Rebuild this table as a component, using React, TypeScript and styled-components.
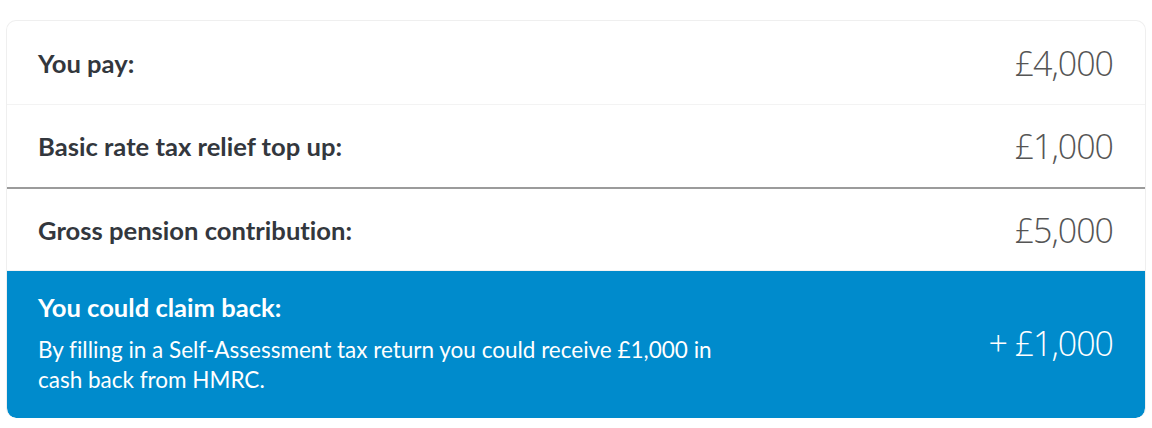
import React from "react";
import styled, { createGlobalStyle } from "styled-components";

const Global = createGlobalStyle`
  html, body { margin: 0; padding: 0; background: #ffffff; }
  body { font-family: Lato, "Open Sans", Arial, sans-serif; font-variant-ligatures: none; }
`;

const Page = styled.div`
  padding: 20px 6px 10px 6px;
`;

const Card = styled.div`
  border: 1px solid #efefef;
  border-bottom: none;
  border-radius: 10px;
  overflow: hidden;
  background: #fff;
  display: flex;
  flex-direction: column;
`;

const Row = styled.div<{ $strong?: boolean; $last?: boolean }>`
  display: flex;
  align-items: center;
  justify-content: space-between;
  height: ${(p) => (p.$strong ? 82 : p.$last ? 81 : 83)}px;
  padding: 0 32px 0 31px;
  border-bottom: ${(p) => (p.$strong ? "2px solid #9b9b9b" : "1px solid #f3f3f3")};
`;

const Label = styled.div`
  font-family: Lato, "Open Sans", Arial, sans-serif;
  font-weight: 700;
  font-size: 25.6px;
  line-height: 32px;
  color: #33373d;
`;

const Amount = styled.div`
  font-family: "Open Sans", Lato, Arial, sans-serif;
  font-weight: 300;
  font-size: 34px;
  color: #555555;
  letter-spacing: -1px;
  white-space: nowrap;
`;

const Highlight = styled.div`
  background: #008bcc;
  color: #fff;
  display: flex;
  align-items: center;
  justify-content: space-between;
  padding: 20px 32px 23px 31px;
  border-radius: 0 0 9px 9px;
`;

const HighlightText = styled.div`
  display: flex;
  flex-direction: column;
  gap: 12px;
`;

const HighlightTitle = styled(Label)`
  color: #ffffff;
`;

const HighlightBody = styled.div`
  font-family: Lato, "Open Sans", Arial, sans-serif;
  font-size: 22.5px;
  line-height: 30px;
  max-width: 700px;
`;

const HighlightAmount = styled(Amount)`
  color: #ffffff;
`;

export default function App() {
  return (
    <>
      <Global />
      <Page>
        <Card>
          <Row>
            <Label>You pay:</Label>
            <Amount>£4,000</Amount>
          </Row>
          <Row $strong>
            <Label>Basic rate tax relief top up:</Label>
            <Amount>£1,000</Amount>
          </Row>
          <Row $last>
            <Label>Gross pension contribution:</Label>
            <Amount>£5,000</Amount>
          </Row>
          <Highlight>
            <HighlightText>
              <HighlightTitle>You could claim back:</HighlightTitle>
              <HighlightBody>
                By filling in a Self-Assessment tax return you could receive £1,000 in cash back from HMRC.
              </HighlightBody>
            </HighlightText>
            <HighlightAmount>+ £1,000</HighlightAmount>
          </Highlight>
        </Card>
      </Page>
    </>
  );
}
